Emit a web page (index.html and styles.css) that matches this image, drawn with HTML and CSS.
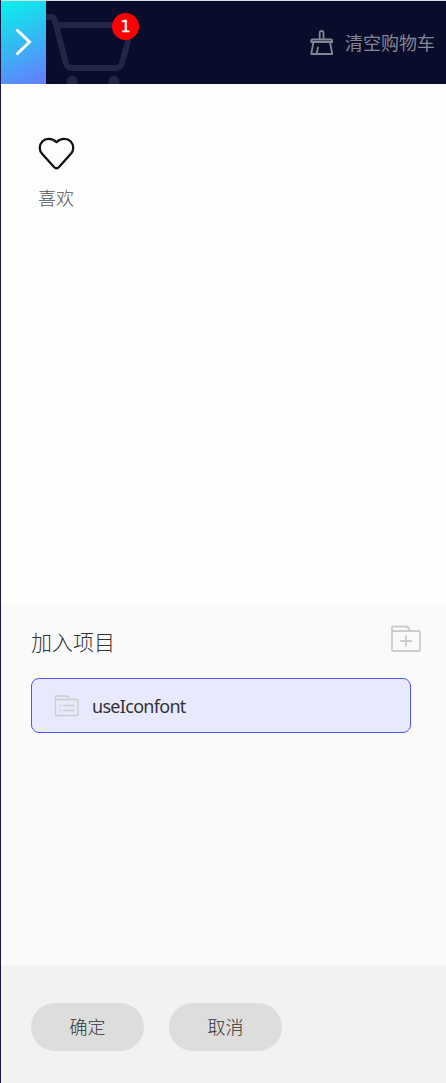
FILE: index.html
```
<!DOCTYPE html>
<html lang="zh-CN">
<head>
    <meta charset="UTF-8">
    <meta name="viewport" content="width=device-width, initial-scale=1.0">
    <title>购物车</title>
    <link rel="stylesheet" href="styles.css">
</head>
<body>
    <div class="cart-panel">
        <!-- Header -->
        <header class="header">
            <button class="toggle" type="button">
                <svg width="45" height="83" viewBox="0 0 45 83"><path d="M15.500 28.500L28.500 41L15.500 53.500"/></svg>
            </button>
            <div class="cart">
                <svg width="94" height="83" viewBox="46 1 94 83">
                    <path d="M44 17h6.500q3.500 0 4.500 4l10.500 41q1.500 6 7 6h43q5 0 6.500-5l10.500-38H57"/>
                    <circle cx="72.300" cy="81.300" r="5.500"/>
                    <circle cx="114" cy="81.300" r="5.500"/>
                </svg>
                <span class="badge">1</span>
            </div>
            <a class="clear">
                <svg width="24" height="26" viewBox="0 0 24 26">
                    <path d="M9.700 9.500V2.500q0-1.500 1.900-1.500t1.900 1.500v7M1.200 12v-1q0-1.500 1.500-1.500h18q1.500 0 1.500 1.500v1zM3.500 12L1.200 24h21L20 12M8 17.500l-1.500 6.500"/>
                </svg>
                <span>清空购物车</span>
            </a>
        </header>

        <!-- Icons in the cart -->
        <div class="icon-list">
            <div class="icon-item">
                <svg width="37" height="34" viewBox="0 0 37 34">
                    <path d="M18.500 5.300C14 .800 7.500 1.200 4.300 4.500C.900 8 .900 13.500 4.300 17L16 30Q18.500 32.500 21 30L32.700 17C36.100 13.500 36.100 8 32.700 4.500C29.500 1.200 23 .800 18.500 5.300z"/>
                </svg>
                <span>喜欢</span>
            </div>
        </div>

        <!-- Projects -->
        <section class="projects">
            <div class="projects-title">
                <h2>加入项目</h2>
                <svg class="add" width="32" height="28" viewBox="0 0 32 28">
                    <path d="M2 6V2.500q0-1 1-1h12q4 0 4.500 4.500M3 6h26q1 0 1 1v18q0 1-1 1H3q-1 0-1-1V6zM11 16h10M16 11v10"/>
                </svg>
            </div>
            <div class="project active">
                <svg width="25" height="22" viewBox="0 0 25 22">
                    <path d="M1.500 5V1.800q0-.8.800-.8h9.700q2.500 0 3.200 3M1.500 4.500h21.500q1 0 1 1v14q0 1-1 1H2.500q-1 0-1-1zM9.500 10.500H20M9.500 15.500H20M5.500 10.500h1M5.500 15.500h1"/>
                </svg>
                <span>useIconfont</span>
            </div>
        </section>

        <!-- Buttons -->
        <footer class="footer">
            <button class="btn" type="button">确定</button>
            <button class="btn" type="button">取消</button>
        </footer>
    </div>
</body>
</html>
```
FILE: styles.css
```
* {
    box-sizing: border-box;
}

body {
    margin: 0;
    background: #1d1548;
    font-family: "Noto Sans", "Noto Sans CJK SC", sans-serif;
    font-size: 18px;
    font-weight: 300;
    color: #333;
}

svg {
    display: block;
    fill: none;
    stroke: currentColor;
    stroke-linecap: round;
    stroke-linejoin: round;
}

button {
    border: none;
    padding: 0;
    font: inherit;
    color: inherit;
    cursor: pointer;
}

.cart-panel {
    display: flex;
    flex-direction: column;
    height: 1083px;
    margin-left: 1px;
    border-top: 1px solid #dce0e0;
    background: #fdfdfd;
}

/* Header */
.header {
    display: flex;
    height: 83px;
    background: #090d2b;
}

.toggle {
    width: 45px;
    background: linear-gradient(155deg, #06f4e8, #667aff);
    color: #fff;
}

.toggle svg {
    stroke-width: 3;
    stroke-linecap: butt;
    stroke-linejoin: miter;
}

.cart {
    position: relative;
    color: #222644;
}

.cart svg {
    stroke-width: 6;
}

.cart circle {
    fill: currentColor;
    stroke: none;
}

.badge {
    position: absolute;
    top: 12px;
    left: 66px;
    width: 27px;
    height: 27px;
    border-radius: 50%;
    background: #f00;
    color: #fff;
    font-family: "DejaVu Sans", sans-serif;
    font-size: 16px;
    font-weight: 400;
    line-height: 28px;
    text-align: center;
    -webkit-text-stroke: 0.4px #fff;
}

.clear {
    display: flex;
    align-items: center;
    gap: 11px;
    margin-left: auto;
    padding-right: 11px;
    color: #858695;
}

.clear svg {
    stroke-width: 1.8;
}

.clear span {
    line-height: 26px;
    font-weight: 400;
}

/* Icons */
.icon-list {
    height: 519px;
    padding: 53px 37px;
}

.icon-item {
    display: flex;
    flex-direction: column;
    gap: 14px;
    width: 38px;
    color: #555;
    line-height: 26px;
    white-space: nowrap;
}

.icon-item svg {
    color: #111;
    stroke-width: 2.3;
}

/* Projects */
.projects {
    flex: 1;
    padding: 22px 24px 0 30px;
    background: #fafafa;
}

.projects-title {
    display: flex;
    justify-content: space-between;
}

.projects-title h2 {
    margin: 0;
    font-size: 21px;
    font-weight: 300;
    line-height: 34px;
}

.add {
    color: #ccc;
    stroke-width: 1.8;
}

.project {
    display: flex;
    align-items: center;
    gap: 13px;
    width: 380px;
    height: 55px;
    margin-top: 19px;
    padding-left: 22px;
    border: 1px solid transparent;
    border-radius: 8px;
    font-weight: 400;
    letter-spacing: -0.7px;
}

.project.active {
    border-color: #4c59f5;
    background: #e8e9fc;
}

.project svg {
    color: #ccc;
    stroke-width: 1.3;
}

/* Footer */
.footer {
    display: flex;
    gap: 25px;
    height: 118px;
    padding: 38px 30px;
    background: #f2f2f2;
}

.btn {
    width: 113px;
    height: 48px;
    padding-bottom: 2px;
    border-radius: 24px;
    background: #ddd;
}
```
